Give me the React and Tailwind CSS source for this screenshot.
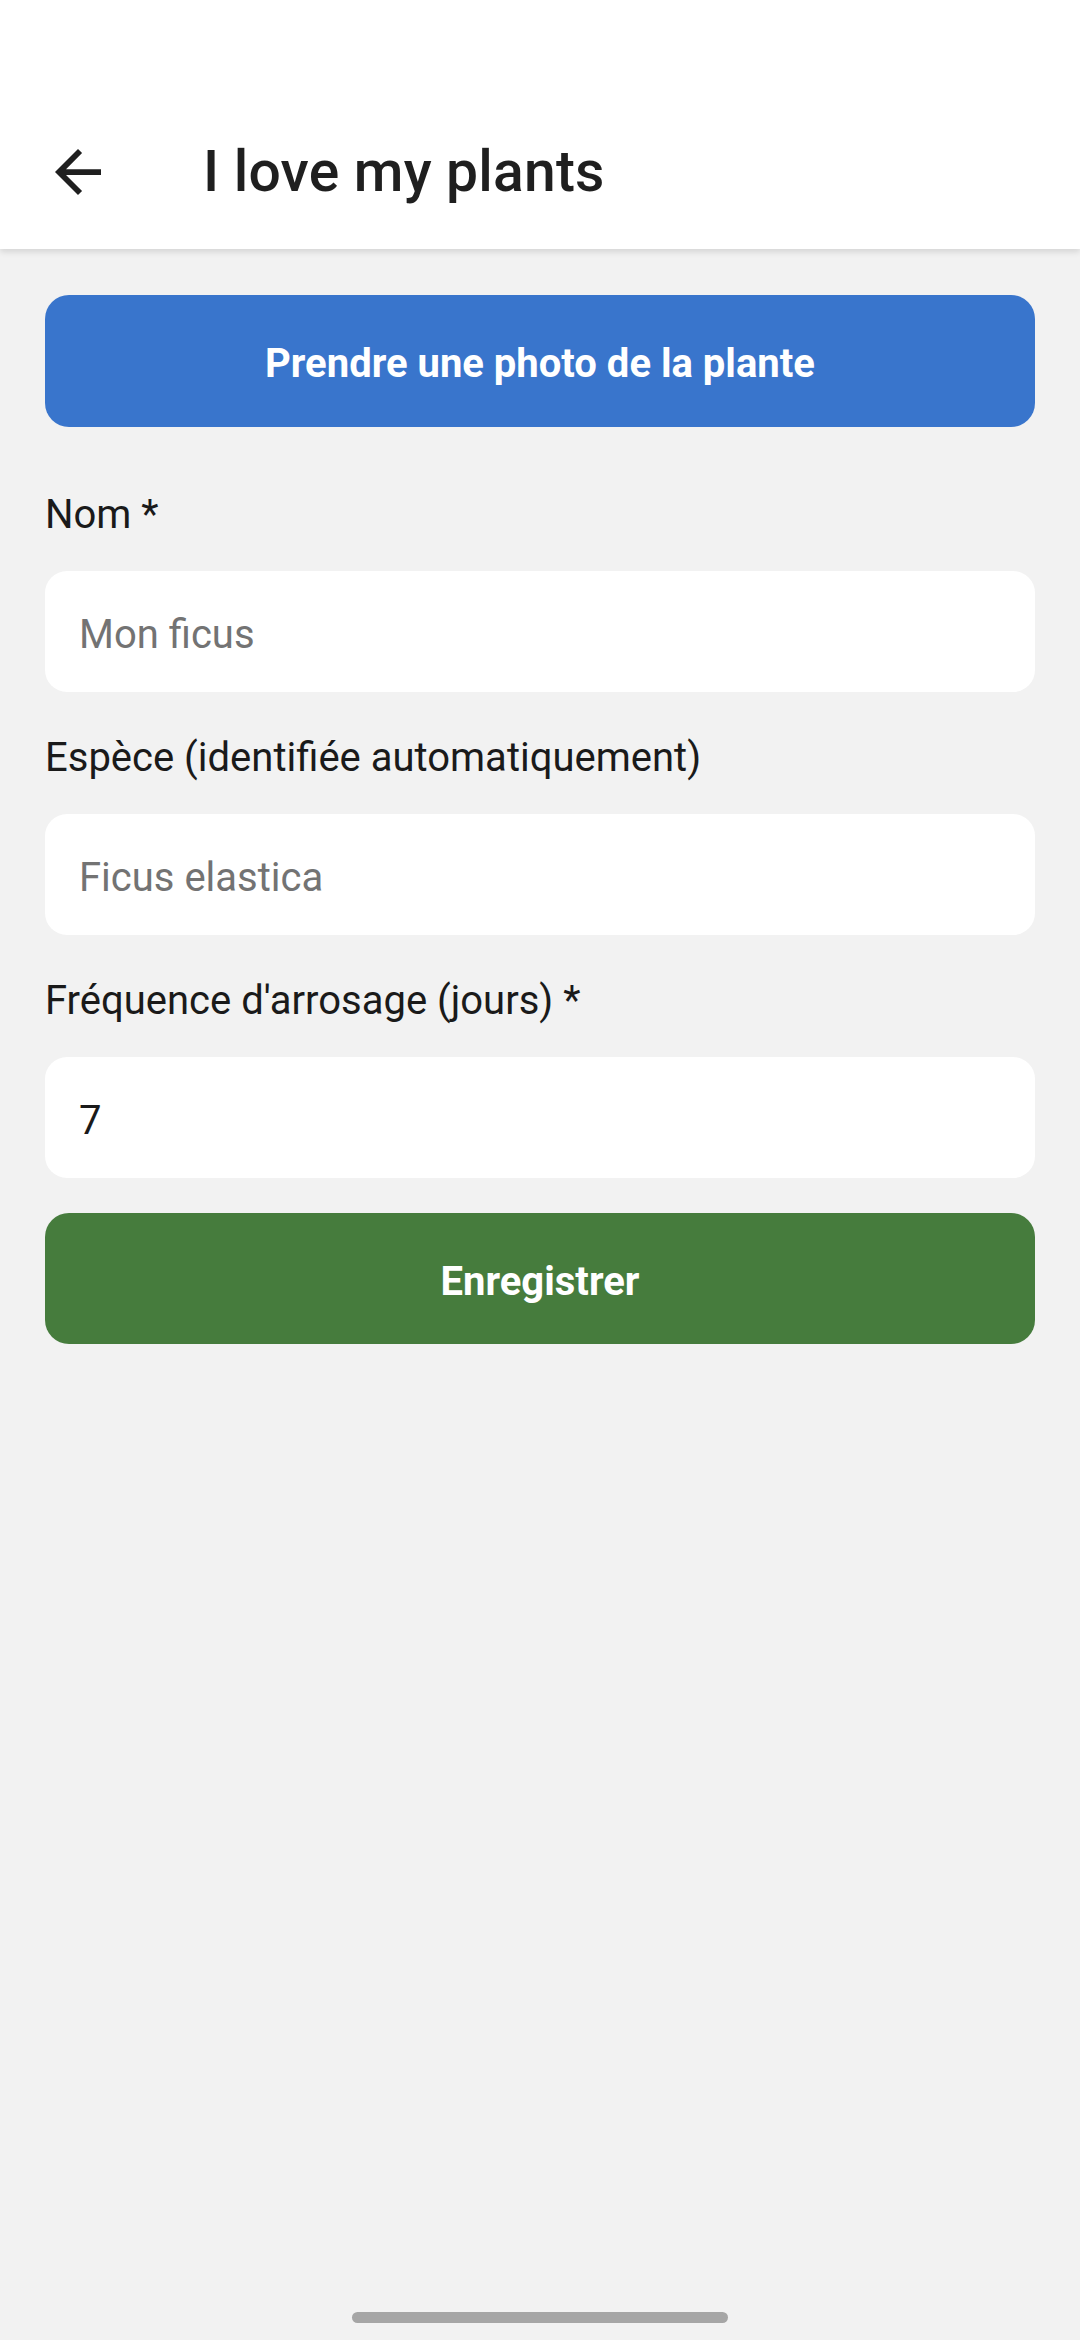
import React, { useState } from "react";

const BackArrow = () => (
  <svg width="46" height="46" viewBox="4 4 16 16" fill="#1f1f1f">
    <path d="M20 11H7.83l5.59-5.59L12 4l-8 8 8 8 1.41-1.41L7.83 13H20v-2z" />
  </svg>
);

const Field = ({ label, placeholder, value, onChange, first }) => (
  <div className={first ? "mt-[55px]" : "mt-[33px]"}>
    <label className="block text-[40px] leading-[60px] pt-[3px] h-[60px] text-[#1a1a1a] mb-[29px]">
      {label}
    </label>
    <input
      className="w-full h-[121px] bg-white rounded-[22px] px-[34px] pt-[6px] text-[40px] text-[#1a1a1a] placeholder:text-[#737373] outline-none"
      placeholder={placeholder}
      value={value}
      onChange={onChange}
    />
  </div>
);

const App = () => {
  const [name, setName] = useState("");
  const [species, setSpecies] = useState("");
  const [days, setDays] = useState("7");

  return (
    <div
      className="relative min-h-[2340px] bg-[#f2f2f2] flex flex-col"
      style={{ fontFamily: "Roboto, 'Noto Sans', sans-serif" }}
    >
      <div className="bg-white h-[249px] pt-[94px] shadow-[0_3px_6px_rgba(0,0,0,0.12)] relative z-10">
        <div className="h-[155px] flex items-center">
          <div className="ml-[55px] w-[46px] flex items-center">
            <BackArrow />
          </div>
          <h1 className="ml-[102px] text-[57px] font-medium text-[#1f1f1f] tracking-[0.2px]">
            I love my plants
          </h1>
        </div>
      </div>

      <div className="px-[45px] pt-[46px] flex flex-col">
        <button className="h-[132px] w-full rounded-[24px] bg-[#3975cc] pt-[6px] text-white text-[40px] font-bold">
          Prendre une photo de la plante
        </button>

        <Field
          first
          label="Nom *"
          placeholder="Mon ficus"
          value={name}
          onChange={(e) => setName(e.target.value)}
        />
        <Field
          label="Espèce (identifiée automatiquement)"
          placeholder="Ficus elastica"
          value={species}
          onChange={(e) => setSpecies(e.target.value)}
        />
        <Field
          label="Fréquence d'arrosage (jours) *"
          placeholder=""
          value={days}
          onChange={(e) => setDays(e.target.value)}
        />

        <button className="mt-[35px] h-[131px] w-full rounded-[24px] bg-[#467c3d] pt-[6px] text-white text-[40px] font-bold">
          Enregistrer
        </button>
      </div>

      <div className="absolute bottom-[17px] left-1/2 -translate-x-1/2 w-[376px] h-[11px] rounded-full bg-[#a6a6a6]" />
    </div>
  );
};

export default App;
